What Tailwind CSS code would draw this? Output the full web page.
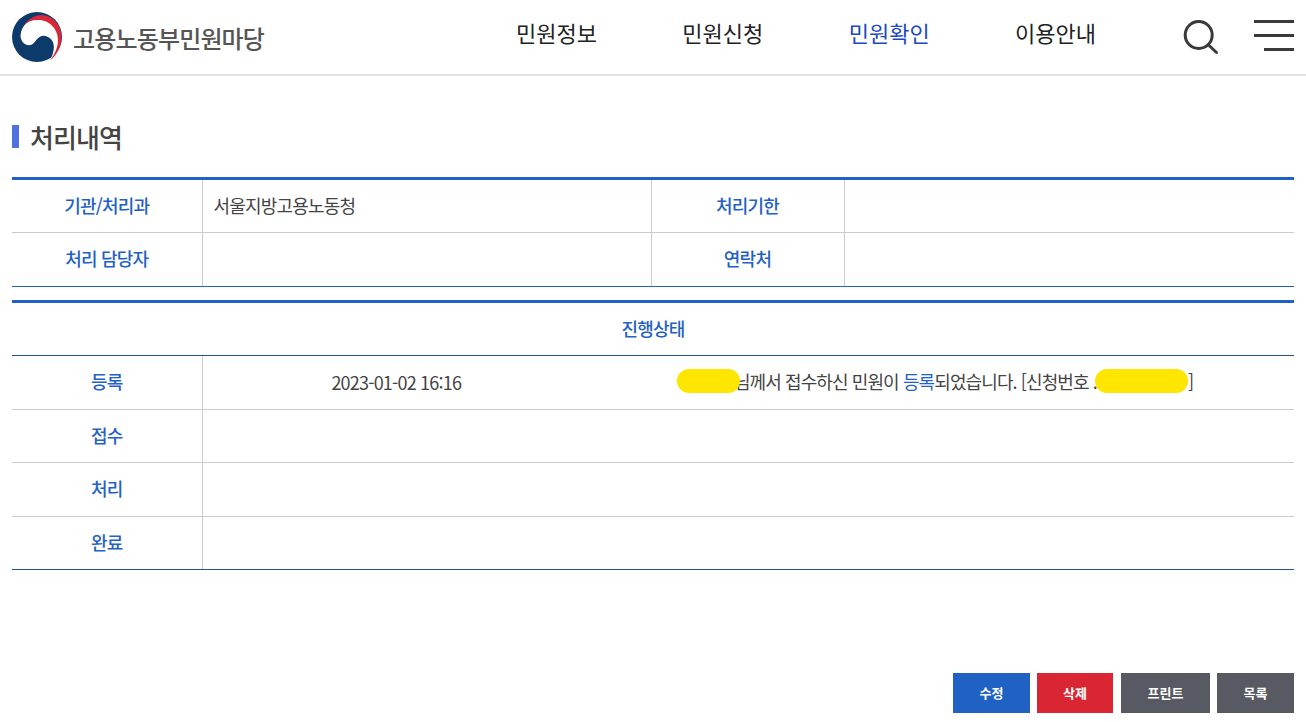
<!DOCTYPE html>
<html lang="ko">
  <head>
    <meta charset="UTF-8" />
    <title>고용노동부 민원마당</title>
    <script src="https://cdn.jsdelivr.net/npm/@tailwindcss/browser@4"></script>
  </head>
  <body class="bg-white font-['Noto_Sans_CJK_KR','Noto_Sans',sans-serif] text-[#444] overflow-hidden">
    <!-- header -->
    <header class="h-[76px] border-b-2 border-[#e4e4e4] flex items-center pl-3 relative">
      <svg class="w-[50px] h-[50px] shrink-0" viewBox="0 0 50 50">
        <circle cx="25" cy="25" r="25" fill="#0b3a6b" />
        <path d="M8.5 24C9 13 18 6 27 6C39 6 47 16 47 27C47 35 44 43 38 48.5C41 43 42.5 37 41.5 32C40.5 27 35 23 30 24C25 25 24 30 20 32.5C15 35 9 31 8.5 24Z" fill="#fff" />
        <path d="M12 13C17 6 24 2.5 31 3C42 4.5 50 14 49.5 26C49 36 44 44 38 48.5C43 42 46 35 46 28C46 17 37 8 27 8C21 7.5 16 9.5 12 13Z" fill="#d9273a" />
      </svg>
      <span class="ml-[11px] mt-px text-[24px] tracking-[-0.85px] font-medium text-[#555] whitespace-nowrap">고용노동부민원마당</span>
      <nav class="absolute left-[516px] top-0 h-[65px] flex items-center gap-[85.4px] text-[22px] text-[#222]">
        <a href="#">민원정보</a>
        <a href="#">민원신청</a>
        <a href="#" class="text-[#2148c0]">민원확인</a>
        <a href="#">이용안내</a>
      </nav>
      <svg class="absolute left-[1183px] top-[19px] w-[36px] h-[36px]" viewBox="0 0 36 36" fill="none" stroke="#3a3a3a">
        <circle cx="15.7" cy="16" r="13.5" stroke-width="3" />
        <path d="M25.5 26l8 7.5" stroke-width="3" stroke-linecap="round" />
      </svg>
      <div class="absolute left-[1254px] top-[20px] w-10 flex flex-col items-end gap-[11px]">
        <span class="block w-10 h-[3px] bg-[#3a3a3a]"></span>
        <span class="block w-10 h-[3px] bg-[#3a3a3a]"></span>
        <span class="block w-[30px] h-[3px] bg-[#3a3a3a]"></span>
      </div>
    </header>

    <main class="px-3">
      <!-- title -->
      <h2 class="mt-[48px] flex items-center h-6 text-[26px] font-medium tracking-[-0.9px] text-[#444]">
        <span class="w-[7px] h-[23px] bg-[#4e70e0] mr-[11px]"></span>처리내역
      </h2>

      <!-- info table -->
      <table class="mt-[29px] w-full table-fixed border-collapse border-t-[3px] border-[#1f62c4] text-[18px] tracking-[-0.8px]">
        <colgroup>
          <col class="w-[190px]" /><col class="w-[449px]" /><col class="w-[193px]" /><col />
        </colgroup>
        <tbody>
          <tr class="h-[54px]">
            <th class="pb-[2px] font-medium text-[#1f62c4] border-r border-b border-[#ccc]">기관/처리과</th>
            <td class="pb-[2px] pl-[11px] border-r border-b border-[#ccc]">서울지방고용노동청</td>
            <th class="pb-[2px] font-medium text-[#1f62c4] border-r border-b border-[#ccc]">처리기한</th>
            <td class="border-b border-[#ccc]"></td>
          </tr>
          <tr class="h-[54px]">
            <th class="pb-[2px] font-medium text-[#1f62c4] border-r border-[#ccc] border-b border-b-[#1f62c4]">처리 담당자</th>
            <td class="border-r border-[#ccc] border-b border-b-[#1f62c4]"></td>
            <th class="pb-[2px] font-medium text-[#1f62c4] border-r border-[#ccc] border-b border-b-[#1f62c4]">연락처</th>
            <td class="border-b border-b-[#1f62c4]"></td>
          </tr>
        </tbody>
      </table>

      <!-- status table -->
      <table class="mt-[13px] w-full table-fixed border-collapse border-t-[3px] border-[#1f62c4] text-[18px] tracking-[-0.8px]">
        <colgroup>
          <col class="w-[190px]" /><col class="w-[388px]" /><col />
        </colgroup>
        <thead>
          <tr class="h-[54px]">
            <th colspan="3" class="pb-[2px] font-medium text-[#1f62c4] border-b border-[#24508f]">진행상태</th>
          </tr>
        </thead>
        <tbody>
          <tr class="h-[54px]">
            <th class="pb-[2px] font-medium text-[#1f62c4] border-r border-b border-[#ccc]">등록</th>
            <td class="text-center border-b border-[#ccc]">2023-01-02 16:16</td>
            <td class="text-center whitespace-nowrap pr-[14px] tracking-[-0.9px] border-b border-[#ccc]">
              <span class="relative -top-[4px] inline-block w-[63px] h-6 align-middle rounded-full bg-[#ffe600] -mr-[6px]"></span>님께서 접수하신 민원이 <span class="text-[#1f62c4]">등록</span>되었습니다. [신청번호 .<span class="relative -top-[4px] inline-block w-[93px] h-6 align-middle rounded-full bg-[#ffe600] -ml-[2px]"></span>]
            </td>
          </tr>
          <tr class="h-[53px]">
            <th class="pb-[2px] font-medium text-[#1f62c4] border-r border-b border-[#ccc]">접수</th>
            <td class="border-b border-[#ccc]"></td><td class="border-b border-[#ccc]"></td>
          </tr>
          <tr class="h-[54px]">
            <th class="pb-[2px] font-medium text-[#1f62c4] border-r border-b border-[#ccc]">처리</th>
            <td class="border-b border-[#ccc]"></td><td class="border-b border-[#ccc]"></td>
          </tr>
          <tr class="h-[53px]">
            <th class="pb-[2px] font-medium text-[#1f62c4] border-r border-[#ccc] border-b border-b-[#24508f]">완료</th>
            <td class="border-b border-[#24508f]"></td><td class="border-b border-[#24508f]"></td>
          </tr>
        </tbody>
      </table>

      <!-- buttons -->
      <div class="mt-[103px] flex justify-end text-[13px] font-bold text-white">
        <a href="#" class="w-[77px] h-10 flex items-center justify-center bg-[#1f62c4]">수정</a>
        <a href="#" class="ml-[7px] w-[76px] h-10 flex items-center justify-center bg-[#da2632]">삭제</a>
        <a href="#" class="ml-2 w-[89px] h-10 flex items-center justify-center bg-[#585a63]">프린트</a>
        <a href="#" class="ml-[7px] w-[77px] h-10 flex items-center justify-center bg-[#585a63]">목록</a>
      </div>
    </main>
  </body>
</html>
